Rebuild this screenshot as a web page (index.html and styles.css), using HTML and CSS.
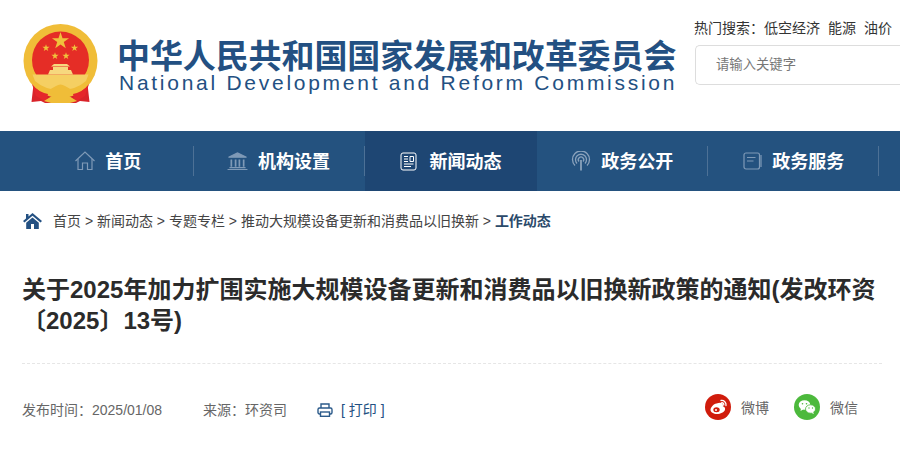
FILE: index.html
```html
<!DOCTYPE html>
<html lang="zh-CN">
<head>
    <meta charset="UTF-8">
    <meta name="viewport" content="width=device-width, initial-scale=1.0">
    <title>国家发展和改革委员会</title>
    <link rel="stylesheet" href="styles.css">
</head>
<body>
    <header class="top">
        <div class="logo">
            <svg class="emblem" width="78" height="80" viewBox="0 0 78 80">
                <defs>
                    <path id="star" d="M0 -1 L.225 -.31 L.951 -.309 L.363 .118 L.588 .809 L0 .382 L-.588 .809 L-.363 .118 L-.951 -.309 L-.225 -.31 Z" fill="#f0c23c"/>
                </defs>
                <path d="M12 56 L9.500 78 L19 77 L23 79 H54 L58 77 L67.500 78 L65 56 Z" fill="#d9232a"/>
                <circle cx="38.500" cy="37" r="37" fill="#f0bd38"/>
                <circle cx="38.500" cy="36" r="28.500" fill="#e52d26"/>
                <path d="M10.500 50.500 H66.500 L64 57 Q54 66 38.500 66 Q23 66 13 57 Z" fill="#f5cf62"/>
                <path d="M26 50.500 L28 46 H31 V43 H46 V46 H49 L51 50.500 Z" fill="#f7d87e"/>
                <path d="M29 42.500 H48 L45 40 H32 Z" fill="#f7d87e"/>
                <path d="M10 60 Q16 68 26 70 L24 78 L14 72 Z" fill="#e5262b"/>
                <path d="M67 60 Q61 68 51 70 L53 78 L63 72 Z" fill="#e5262b"/>
                <path d="M24 68 Q30 64 34 62 Q38.500 59 43 62 Q47 64 53 68 L47 72 L55 77 L48 79 H29 L22 77 L30 72 Z" fill="#f0bd38"/>
                <use href="#star" transform="translate(38.500 17) scale(9)"/>
                <use href="#star" transform="translate(24 24) scale(3.800)"/>
                <use href="#star" transform="translate(52.500 24) scale(3.800)"/>
                <use href="#star" transform="translate(33 32) scale(3.800)"/>
                <use href="#star" transform="translate(44 32) scale(3.800)"/>
            </svg>
            <div class="logo-text">
                <div class="logo-cn">中华人民共和国国家发展和改革委员会</div>
                <div class="logo-en">National Development and Reform Commission</div>
            </div>
        </div>
        <div class="search">
            <div class="hot">
                <span>热门搜索：</span>
                <a href="#">低空经济</a>
                <a href="#">能源</a>
                <a href="#">油价</a>
            </div>
            <input class="search-box" type="text" placeholder="请输入关键字">
        </div>
    </header>

    <nav class="nav">
        <a class="nav-item" href="#">
            <svg class="nav-icon" width="20" height="20" viewBox="0 0 20 20" fill="none" stroke="#7f9ab7" stroke-width="1.200">
                <path d="M0.500 10 L10 1 L19.500 10"/>
                <path d="M3 8 V18.500 H7.500 V12 H12.500 V18.500 H17 V8"/>
            </svg>
            <span class="nav-label">首页</span>
        </a>
        <a class="nav-item nav-item-org" href="#">
            <svg class="nav-icon" width="21" height="18" viewBox="0 0 22 19" fill="none" stroke="#7f9ab7" stroke-width="1.200">
                <path d="M1.500 5.500 L11 1 L20.500 5.500 Z" fill="#7f9ab7"/>
                <path d="M4.500 8 V15.500 M9 8 V15.500 M13 8 V15.500 M17.500 8 V15.500" stroke-width="1.800"/>
                <path d="M2.500 16.500 H19.500 M0.500 18.500 H21.500"/>
            </svg>
            <span class="nav-label">机构设置</span>
        </a>
        <a class="nav-item active" href="#">
            <svg class="nav-icon nav-icon-news" width="17" height="19" viewBox="0 0 17 19" fill="none" stroke="#fff" stroke-width="1">
                <rect x="1" y="1" width="15" height="17" rx="2"/>
                <path d="M4 4.500 H8 M4 7 H8 M4 9.500 H8 M10 4.500 H13.500 V9.500 H10 Z M4 12 H13.500 M4 14.500 H11"/>
            </svg>
            <span class="nav-label">新闻动态</span>
        </a>
        <a class="nav-item" href="#">
            <svg class="nav-icon" width="20" height="20" viewBox="0 0 20 20" fill="none" stroke="#8aa2bc" stroke-width="1.300">
                <path d="M4 14.500 A8.500 8.500 0 1 1 16 14.500"/>
                <path d="M6 12.500 A5.500 5.500 0 1 1 14 12.500"/>
                <path d="M8 10.500 A2.700 2.700 0 1 1 12 10.500"/>
                <path d="M10 9 V19.500" stroke-width="1.800"/>
            </svg>
            <span class="nav-label">政务公开</span>
        </a>
        <a class="nav-item" href="#">
            <svg class="nav-icon" width="19" height="18" viewBox="0 0 19 18" fill="none" stroke="#7f9ab7" stroke-width="1.200">
                <rect x="1" y="1" width="15.500" height="16" rx="2"/>
                <path d="M4 5.500 H12.500 M4 9 H10.500 M18 3 V15"/>
            </svg>
            <span class="nav-label">政务服务</span>
        </a>
    </nav>

    <div class="crumbs">
        <svg class="home" width="19" height="16" viewBox="0 0 19 16">
            <path d="M9.500 0 L19 8 L17.500 9.500 L9.500 2.800 L1.500 9.500 L0 8 L3 5.500 V1 H5.500 V3.400 Z" fill="#235082"/>
            <path d="M3.200 9.800 L9.500 4.500 L15.800 9.800 V16 H11 V11 H8 V16 H3.200 Z" fill="#235082"/>
        </svg>
        <div class="crumb-links"><a href="#">首页</a> &gt; <a href="#">新闻动态</a> &gt; <a href="#">专题专栏</a> &gt; <a href="#">推动大规模设备更新和消费品以旧换新</a> &gt; <a class="current" href="#">工作动态</a></div>
    </div>

    <main class="article">
        <h1 class="title">关于2025年加力扩围实施大规模设备更新和消费品以旧换新政策的通知(发改环资〔2025〕13号)</h1>
        <div class="meta">
            <span class="date">发布时间：2025/01/08</span>
            <span class="source">来源：环资司</span>
            <a class="print" href="#">
                <svg width="16" height="14" viewBox="0 0 16 14" fill="none" stroke="#2b5a8a" stroke-width="1.400">
                    <path d="M4 5 V1 H12 V5"/>
                    <rect x="1" y="5" width="14" height="6" rx="1.500"/>
                    <rect x="3.500" y="9" width="9" height="4.300" fill="#fff"/>
                </svg>
                [ 打印 ]
            </a>
            <div class="share">
                <a class="share-item" href="#">
                    <svg width="26" height="26" viewBox="0 0 26 26">
                        <circle cx="13" cy="13" r="13" fill="#d01c0c"/>
                        <path d="M11.500 9.500 C15 8 18 8.500 18 11 C18 11.500 18 12 17.800 12.300 C19.500 12.800 20.500 14 20 15.800 C19.200 18.500 15.500 20 12 20 C8.500 20 5.500 18.500 5.500 15.800 C5.500 13.500 8.500 10 11.500 9.500 Z" fill="#fff"/>
                        <ellipse cx="11.500" cy="15.800" rx="3.200" ry="2.500" fill="#d01c0c"/>
                        <circle cx="11" cy="16" r="1" fill="#fff"/>
                        <path d="M16 6.500 C19 6 21.500 8.500 21 11.500 M16.500 8.800 C18 8.500 19 9.500 18.800 11" fill="none" stroke="#fff" stroke-width="1.300" stroke-linecap="round"/>
                    </svg>
                    微博
                </a>
                <a class="share-item" href="#">
                    <svg width="26" height="26" viewBox="0 0 26 26">
                        <circle cx="13" cy="13" r="13" fill="#4cb93c"/>
                        <ellipse cx="10.500" cy="11" rx="5.800" ry="4.800" fill="#fff"/>
                        <path d="M7 14 L6.500 17 L9.500 15.300 Z" fill="#fff"/>
                        <ellipse cx="16.500" cy="15" rx="5" ry="4.200" fill="#fff" stroke="#4cb93c" stroke-width="0.800"/>
                        <path d="M19 18 L20 20 L17 18.800 Z" fill="#fff"/>
                        <circle cx="8.500" cy="9.800" r="0.800" fill="#4cb93c"/>
                        <circle cx="12.500" cy="9.800" r="0.800" fill="#4cb93c"/>
                        <circle cx="15" cy="14" r="0.700" fill="#4cb93c"/>
                        <circle cx="18.500" cy="14" r="0.700" fill="#4cb93c"/>
                    </svg>
                    微信
                </a>
            </div>
        </div>
    </main>
</body>
</html>
```

FILE: styles.css
```css
html, body {
    margin: 0;
    padding: 0;
    height: 462px;
    overflow: hidden;
}

body {
    font-family: "Liberation Sans", "Noto Sans CJK SC", sans-serif;
    font-size: 14px;
    color: #333;
    background-color: #fff;
}

a {
    color: inherit;
    text-decoration: none;
}

.top {
    display: flex;
    height: 131px;
    padding-left: 22px;
}

.logo {
    display: flex;
    align-items: flex-start;
    flex: 0 0 673px;
    padding-top: 24px;
    box-sizing: border-box;
}

.emblem {
    margin-right: 18px;
}

.logo-text {
    padding-top: 17px;
}

.logo-cn {
    font-size: 33px;
    line-height: 32px;
    font-weight: bold;
    letter-spacing: -0.100px;
    color: #235082;
    white-space: nowrap;
    margin-left: -1px;
}

.logo-en {
    font-size: 21px;
    line-height: 20px;
    letter-spacing: 2.730px;
    color: #235082;
    white-space: nowrap;
    margin-left: 1px;
}

.search {
    flex: 1;
    padding-top: 19px;
}

.hot {
    display: flex;
    gap: 8px;
    line-height: 18px;
    margin-bottom: 8px;
    margin-left: -1px;
}

.hot span {
    margin-right: -8px;
}

.search-box {
    display: block;
    width: 100%;
    height: 40px;
    box-sizing: border-box;
    padding: 0 20px 2px;
    border: 1px solid #ddd;
    border-right: none;
    border-radius: 5px 0 0 5px;
    font-family: inherit;
    font-size: 13.330px;
}

.search-box::placeholder {
    color: #777;
}

.nav {
    display: flex;
    height: 60px;
    padding-left: 22.500px;
    background-color: #24527f;
}

.nav-item {
    position: relative;
    display: flex;
    align-items: center;
    justify-content: center;
    gap: 10px;
    flex: 0 0 171.400px;
    box-sizing: border-box;
    font-size: 18px;
    font-weight: bold;
    color: #fff;
}

.nav-item::after {
    content: "";
    position: absolute;
    right: 0;
    top: 15px;
    height: 30px;
    width: 1px;
    background-color: #4d7196;
}

.nav-item.active {
    background-color: #1e4673;
}

.nav-item.active::after {
    display: none;
}

.nav-item-org {
    padding-right: 2px;
}

.nav-icon-news {
    margin-right: 2px;
}

.nav-label {
    margin-bottom: 3px;
}

.crumbs {
    display: flex;
    align-items: center;
    height: 20px;
    margin-top: 20px;
    padding-left: 23px;
    color: #444;
    white-space: nowrap;
}

.crumbs .home {
    margin-right: 11px;
}

.crumb-links {
    margin-bottom: 3px;
}

.crumbs .current {
    color: #2b4a6a;
    font-weight: bold;
}

.article {
    padding: 0 18px 0 22px;
}

.title {
    margin: 43px 0 0;
    padding-bottom: 27px;
    font-size: 24px;
    line-height: 31px;
    color: #2b2b2b;
    border-bottom: 1px dashed #e6e6e6;
}

.meta {
    display: flex;
    align-items: center;
    height: 26px;
    margin-top: 32px;
    color: #666;
}

.date {
    margin-right: 41px;
}

.source {
    margin-right: 30px;
}

.print {
    display: flex;
    align-items: center;
    gap: 8px;
    color: #235082;
}

.print svg {
    margin-top: 2px;
}

.share {
    display: flex;
    gap: 25px;
    margin-left: auto;
    margin-right: 24px;
    margin-bottom: 4px;
}

.share-item {
    display: flex;
    align-items: center;
    gap: 10px;
}
```
